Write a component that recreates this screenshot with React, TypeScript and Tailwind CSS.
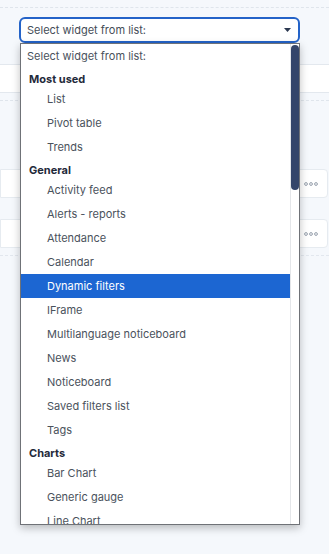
import React from "react";

const groups: { label: string; items: string[] }[] = [
  { label: "Most used", items: ["List", "Pivot table", "Trends"] },
  {
    label: "General",
    items: [
      "Activity feed",
      "Alerts - reports",
      "Attendance",
      "Calendar",
      "Dynamic filters",
      "IFrame",
      "Multilanguage noticeboard",
      "News",
      "Noticeboard",
      "Saved filters list",
      "Tags",
    ],
  },
  { label: "Charts", items: ["Bar Chart", "Generic gauge", "Line Chart"] },
];

function Dots() {
  return (
    <svg width="14" height="4" viewBox="0 0 14 4" className="block">
      <circle cx="2" cy="2" r="1.4" fill="none" stroke="#8a94a3" strokeWidth="0.9" />
      <circle cx="7" cy="2" r="1.4" fill="none" stroke="#8a94a3" strokeWidth="0.9" />
      <circle cx="12" cy="2" r="1.4" fill="none" stroke="#8a94a3" strokeWidth="0.9" />
    </svg>
  );
}

export default function App() {
  return (
    <div
      className="relative w-[329px] h-[554px] overflow-hidden bg-[#f5f8fc]"
      style={{ fontFamily: "Inter, 'Noto Sans', sans-serif" }}
    >
      {/* background content */}
      <div className="pt-[7px]">
        <div className="border-t border-dashed border-[#dfe5ec]" />
        <div className="mt-[9px] ml-[19px] w-[281px] h-[26px] rounded-[6px] border-2 border-[#2463c8] bg-white flex items-center pl-[6px] pr-[6px]">
          <span className="text-[11px] text-[#454d57] flex-1 leading-none pt-[1px]">Select widget from list:</span>
          <svg width="7" height="4" viewBox="0 0 7 4" className="mr-[1px]">
            <path d="M0 0 L7 0 L3.5 4 Z" fill="#2b3850" />
          </svg>
        </div>
        <div className="mt-[21px] h-[29px] bg-white border-y border-[#e3e8ee]" />
        <div className="mt-[7px] border-t border-dashed border-[#dfe5ec]" />
        <div className="mt-[68px] h-[29px] bg-white border border-[#e6ebf0] rounded-r-[4px] mr-[1px] flex items-center justify-end pr-[9px]">
          <Dots />
        </div>
        <div className="mt-[21px] h-[29px] bg-white border border-[#e6ebf0] rounded-r-[4px] mr-[1px] flex items-center justify-end pr-[9px]">
          <Dots />
        </div>
        <div className="mt-[7px] border-t border-dashed border-[#e2e7ee]" />
      </div>

      {/* dropdown overlay */}
      <div className="absolute left-[20px] top-[43px] w-[280px] h-[482px] bg-white border border-[#6f7277] shadow-[0_3px_8px_rgba(0,0,0,0.25)] flex overflow-hidden">
        <div className="flex-1 flex flex-col text-[11px]">
          <div className="h-[24px] shrink-0 flex items-center pt-[1px] pl-[6px] text-[#4a525c]">Select widget from list:</div>
          {groups.map((g) => (
            <React.Fragment key={g.label}>
              <div className="h-[19px] shrink-0 flex items-center pt-[3px] pl-[8px] font-bold text-[#1f2a3a]">{g.label}</div>
              {g.items.map((it) => (
                <div
                  key={it}
                  className={
                    it === "Dynamic filters"
                      ? "h-[24px] shrink-0 flex items-center pt-[1px] pl-[26px] bg-[#1c66d2] text-white"
                      : "h-[24px] shrink-0 flex items-center pt-[1px] pl-[26px] text-[#4a525c]"
                  }
                >
                  {it}
                </div>
              ))}
            </React.Fragment>
          ))}
        </div>
        <div className="w-[9px] shrink-0 border-l border-[#e4e6e9] bg-white pt-[1px]">
          <div className="h-[145px] w-[8px] rounded-[4px] bg-[#34456a]" />
        </div>
      </div>
    </div>
  );
}
